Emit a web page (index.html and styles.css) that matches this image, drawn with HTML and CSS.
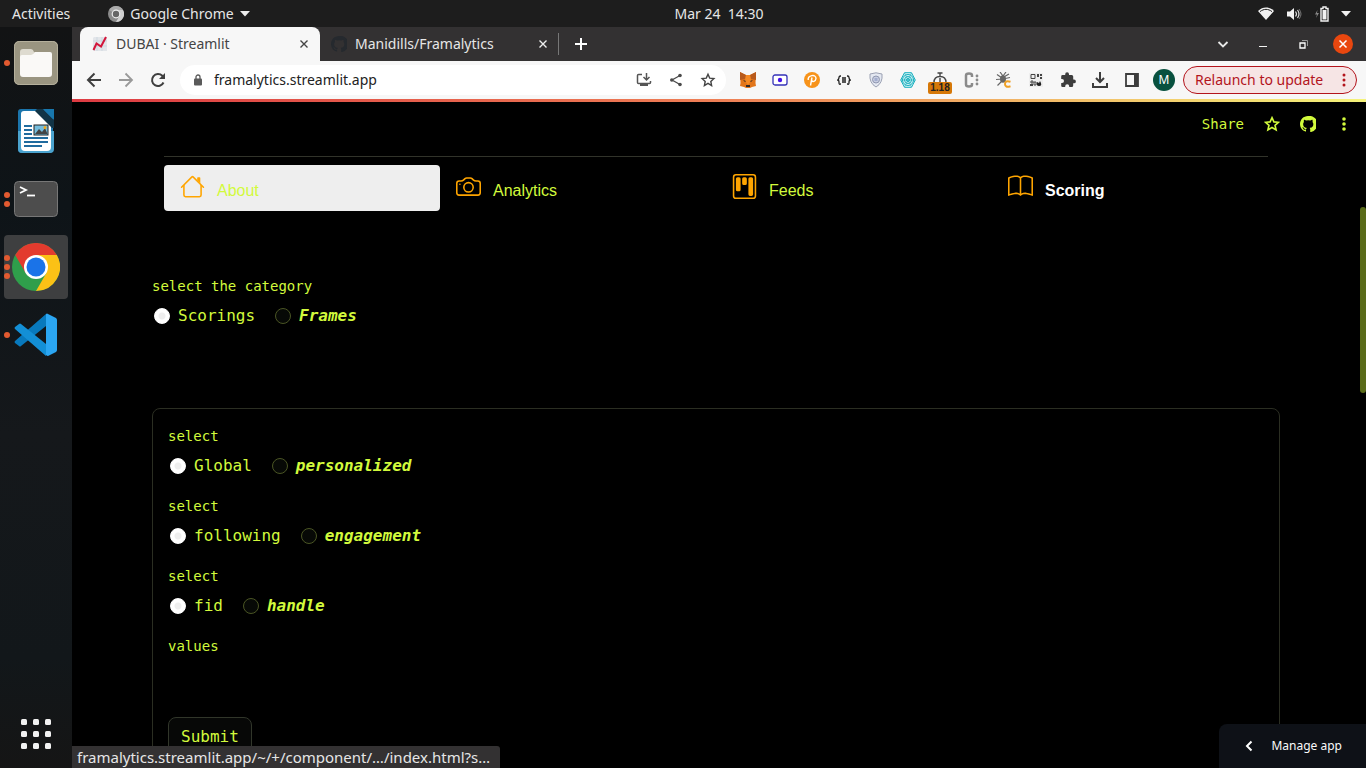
FILE: index.html
```html
<!DOCTYPE html>
<html lang="en">
<head>
<meta charset="utf-8">
<title>DUBAI · Streamlit</title>
<link rel="stylesheet" href="styles.css">
</head>
<body>
<header class="topbar">
  <div class="topbar-left">
    <button class="activities">Activities</button>
    <button class="app-menu">
      <svg width="16" height="16" viewBox="0 0 16 16"><circle cx="8" cy="8" r="8" fill="#8b8b8b"/><path d="M8 8 1.2 4A8 8 0 0 1 15 4H8z" fill="#a9a9a9"/><path d="M8 4h7a8 8 0 0 1-7 12l3.4-6z" fill="#d0d0d0"/><circle cx="8" cy="8" r="4.400" fill="#eee"/><circle cx="8" cy="8" r="3.200" fill="#666"/></svg>
      <span>Google Chrome</span>
      <svg width="10" height="6" viewBox="0 0 10 6"><path d="M0 0h10L5 5.500z" fill="#eee"/></svg>
    </button>
  </div>
  <time class="clock">Mar 24&nbsp; 14:30</time>
  <div class="tray">
    <svg width="16" height="14" viewBox="0 0 16 14"><path d="M0 4C5-.6 11-.6 16 4L8 13z" fill="#f2f2f2"/><path d="M2 4.600c4-3 8-3 12 0" fill="none" stroke="#1d1d1d" stroke-width="1"/></svg>
    <svg width="16" height="14" viewBox="0 0 16 14"><path d="M1 4.500h3L8 1v12L4 9.500H1z" fill="#f2f2f2"/><path d="M9.500 4.500q2 2.500 0 5M11.500 3q3 4 0 8" fill="none" stroke="#ddd" stroke-width="1.200"/><path d="M13 2q4 5 0 10" fill="none" stroke="#777"/></svg>
    <svg width="15" height="16" viewBox="0 0 15 16"><path d="M3.500 4 1 8.500h2L2 12l3-5H3z" fill="#888"/><path d="M9 1h3v1.500h2V15H7V2.500h2z" fill="none" stroke="#f2f2f2" stroke-width="1.400"/><path d="M8.500 4h4v9.500h-4z" fill="#f2f2f2"/></svg>
    <svg width="10" height="6" viewBox="0 0 10 6"><path d="M0 0h10L5 5.500z" fill="#f2f2f2"/></svg>
  </div>
</header>

<div class="desktop">
  <nav class="dock" aria-label="Dock">
    <button class="dock-item" aria-label="Files">
      <span class="dots"><i></i></span>
      <svg width="46" height="46" viewBox="0 0 46 46"><rect x="1" y="1" width="44" height="44" rx="5" fill="#9a9581"/><rect x="1.500" y="1.500" width="43" height="43" rx="5" fill="none" stroke="#b5b09c"/><path d="M7 12q0-3 3-3h8q2 0 3 3l2 1v5H7z" fill="#dedbd0"/><path d="M7 17q0-2 2-2h9q2 0 4-3h15q2 0 2 2v20q0 3-3 3H10q-3 0-3-3z" fill="#faf9f7"/></svg>
    </button>
    <button class="dock-item" aria-label="LibreOffice Writer">
      <svg width="46" height="46" viewBox="0 0 46 46"><path d="M8 1h16l3 4 4-4h9v40q0 4-4 4H9q-4 0-4-4V4q0-3 3-3z" fill="#1b75ac"/><path d="M5 23h36v18q0 4-4 4H9q-4 0-4-4z" fill="#4ba3ce"/><path d="M11 3h12l15 15v21q0 4-4 4H12q-4 0-4-4V6q0-3 3-3z" fill="#fff"/><path d="M24 1h6l11 11v8h-2L22 3z" fill="#123446"/><path d="M30 1h11v11z" fill="#1877ad"/><path d="M11 18h8M11 22h8M11 26h8M11 30h24M11 34h24M11 38h18" stroke="#206b9e" stroke-width="2"/><rect x="21" y="17" width="14" height="10" fill="#75bddd" stroke="#222" stroke-width="1"/><path d="m22 26 4-5 3 3 3-4 2.500 6z" fill="#444"/><circle cx="32" cy="19.500" r="1.500" fill="#f3a81c"/></svg>
    </button>
    <button class="dock-item" aria-label="Terminal">
      <span class="dots"><i></i><i></i></span>
      <svg width="46" height="46" viewBox="0 0 46 46"><rect x="1.500" y="5.500" width="43" height="35" rx="4" fill="#4d4d4d" stroke="#777"/><path d="m7 11 6 3-6 3" fill="none" stroke="#fff" stroke-width="1.800"/><path d="M14 19.500h8" stroke="#fff" stroke-width="1.800"/></svg>
    </button>
    <button class="dock-item dock-active" aria-label="Google Chrome">
      <span class="dots"><i></i><i></i><i></i></span>
      <svg width="48" height="48" viewBox="0 0 48 48"><circle cx="24" cy="24" r="24" fill="#2f9e4b"/><path d="M24 12h20.800A24 24 0 0 1 24 48l10.400-18z" fill="#fbc116"/><path d="M13.600 30 3.200 12a24 24 0 0 1 41.600 0H24z" fill="#e33b2e"/><circle cx="24" cy="24" r="12" fill="#fff"/><circle cx="24" cy="24" r="9.500" fill="#1a73e8"/></svg>
    </button>
    <button class="dock-item" aria-label="Visual Studio Code">
      <span class="dots"><i></i></span>
      <svg width="46" height="46" viewBox="0 0 46 46"><path d="M2 29 33 2v12L8 34q-1 1-2 0l-4-3q-1-1 0-2z" fill="#0879bd"/><path d="M2 17 33 44V32L8 12q-1-1-2 0l-4 3q-1 1 0 2z" fill="#138fd6"/><path d="M33 2q1-1 2 0l8 4q1 1 1 2v30q0 1-1 2l-8 4q-1 0-2-1z" fill="#2ba6f2"/></svg>
    </button>
    <button class="apps-button" aria-label="Show Applications">
      <svg width="32" height="32" viewBox="0 0 32 32" fill="#f2f2f2"><rect x="1" y="1" width="6" height="6" rx="1.500"/><rect x="13" y="1" width="6" height="6" rx="1.500"/><rect x="25" y="1" width="6" height="6" rx="1.500"/><rect x="1" y="13" width="6" height="6" rx="1.500"/><rect x="13" y="13" width="6" height="6" rx="1.500"/><rect x="25" y="13" width="6" height="6" rx="1.500"/><rect x="1" y="25" width="6" height="6" rx="1.500"/><rect x="13" y="25" width="6" height="6" rx="1.500"/><rect x="25" y="25" width="6" height="6" rx="1.500"/></svg>
    </button>
  </nav>

  <div class="browser">
    <div class="tabstrip">
      <div class="tab tab-active">
        <svg width="16" height="16" viewBox="0 0 16 16"><path d="M2 1h13v14H1V2z" fill="#e3e6ea"/><path d="M1 5h14M1 10h14M5 1v14M10 1v14" stroke="#c6d2dc" stroke-width=".7"/><path d="m1.500 14 3-6.500 4.500 3 5-9.500" fill="none" stroke="#d3163b" stroke-width="2"/></svg>
        <button class="tab-title">DUBAI · Streamlit</button>
        <button class="tab-close" aria-label="Close tab"><svg width="8" height="8" viewBox="0 0 8 8"><path d="m.5.5 7 7m0-7-7 7" stroke="#444" stroke-width="1.400"/></svg></button>
      </div>
      <div class="tab">
        <svg width="16" height="16" viewBox="0 0 16 16" fill="#25292e"><path d="M8 0C3.580 0 0 3.580 0 8c0 3.540 2.290 6.530 5.470 7.590.4.070.55-.17.55-.38v-1.490c-2.010.37-2.530-.49-2.690-.94-.5-1.200-.8-1.200-1-1.400.6-.3 1.200 0 2 1.100.8 1 1.500.9 1.900.6.100-.6.300-.9.600-1.100-1.900-.2-3.700-.9-3.700-3.900 0-.9.300-1.600.8-2.200-.1-.2-.3-1 .1-2.100 0 0 .7-.2 2.200.8a7.600 7.600 0 0 1 4 0c1.500-1 2.200-.8 2.200-.8.4 1.100.2 1.900.1 2.100.5.600.8 1.300.8 2.200 0 3.100-1.900 3.700-3.700 3.900.3.300.6.800.6 1.500v2.200c0 .2.100.5.500.4A8 8 0 0 0 8 0z"/></svg>
        <button class="tab-title">Manidills/Framalytics</button>
        <button class="tab-close" aria-label="Close tab"><svg width="8" height="8" viewBox="0 0 8 8"><path d="m.5.5 7 7m0-7-7 7" stroke="#eee" stroke-width="1.400"/></svg></button>
      </div>
      <button class="new-tab" aria-label="New tab"><svg width="12" height="12" viewBox="0 0 12 12"><path d="M6 0v12M0 6h12" stroke="#fff" stroke-width="2"/></svg></button>
      <div class="window-controls">
        <button aria-label="Search tabs"><svg width="12" height="12" viewBox="0 0 12 12"><path d="m1.500 4 4.500 4.500L10.500 4" fill="none" stroke="#e8e8e8" stroke-width="1.800"/></svg></button>
        <button aria-label="Minimize"><svg width="8" height="12" viewBox="0 0 8 12"><path d="M0 8.500h8" stroke="#f2f2f2"/></svg></button>
        <button aria-label="Restore"><svg width="9" height="9" viewBox="0 0 9 9"><path d="M1 3h5v5H1z" fill="none" stroke="#fff" stroke-width="1.300"/><path d="M3 .5h5.500V6" fill="none" stroke="#999"/></svg></button>
        <button aria-label="Close"><svg width="20" height="20" viewBox="0 0 20 20"><circle cx="10" cy="10" r="10" fill="#e9470f"/><path d="m6.500 6.500 7 7m0-7-7 7" stroke="#fff" stroke-width="1.500"/></svg></button>
      </div>
    </div>

    <div class="toolbar">
      <div class="cells nav-buttons">
        <button aria-label="Back"><svg width="16" height="16" viewBox="0 0 16 16"><path d="M15 8H2m6.500-6.500L2 8l6.500 6.500" fill="none" stroke="#3f3f3f" stroke-width="2"/></svg></button>
        <button aria-label="Forward"><svg width="16" height="16" viewBox="0 0 16 16"><path d="M1 8h13M7.500 1.500 14 8l-6.500 6.500" fill="none" stroke="#999" stroke-width="1.800"/></svg></button>
        <button aria-label="Reload"><svg width="16" height="16" viewBox="0 0 16 16"><path d="M13.500 10.500A6 6 0 1 1 12.300 3.800L14 5.500" fill="none" stroke="#3f3f3f" stroke-width="2"/><path d="M15 1v6H9z" fill="#3f3f3f"/></svg></button>
      </div>
      <div class="omnibox">
        <svg width="10" height="12" viewBox="0 0 10 12"><rect x="1" y="4.500" width="8" height="7" rx="1" fill="#5a5a5a"/><path d="M3 5V3a2 2 0 0 1 4 0v2" fill="none" stroke="#5a5a5a" stroke-width="1.300"/></svg>
        <input class="address" type="text" aria-label="Address" value="framalytics.streamlit.app">
        <div class="cells">
          <button aria-label="Install app"><svg width="16" height="16" viewBox="0 0 16 16"><path d="M6 2.500H2.500q-1 0-1 1v7q0 1 1 1h11q1 0 1-1V9M10.500 1v6.500M7.500 5 10.500 8l3-3" fill="none" stroke="#555" stroke-width="1.500"/><path d="M4 12h8v2H4z" fill="#555"/></svg></button>
          <button aria-label="Share page"><svg width="14" height="14" viewBox="0 0 14 14"><path d="M11 2.500 3 7l8 4.500" fill="none" stroke="#4a4a4a" stroke-width="1.300"/><g fill="#4a4a4a"><circle cx="11" cy="2.500" r="1.800"/><circle cx="2.800" cy="7" r="1.800"/><circle cx="11" cy="11.500" r="1.800"/></g></svg></button>
          <button aria-label="Bookmark"><svg width="16" height="16" viewBox="0 0 16 16"><path d="m8 2.300 1.700 3.800 4.200.5-3.100 2.800.8 4.100L8 11.400l-3.600 2.100.8-4.100-3.100-2.800 4.200-.5z" fill="none" stroke="#444" stroke-width="1.400"/></svg></button>
        </div>
      </div>
      <div class="cells extensions">
        <button aria-label="MetaMask"><svg width="18" height="16" viewBox="0 0 18 16"><path d="m1 0 6 3h4l6-3-.5 11L17 14l-4 1-2 1H7l-2-1-4-1 .5-3z" fill="#e2761b"/><path d="m1 0 6 3-1 4-5 1zm16 0-6 3 1 4 5 1z" fill="#b85a1c"/><path d="M7 3h4l1 6-3 4-3-4z" fill="#f58a24"/><path d="m4 8 3 1-1 1zm10 0-3 1 1 1zM7 13h4v2H7z" fill="#302b2b"/></svg></button>
        <button aria-label="Screen recorder"><svg width="16" height="12" viewBox="0 0 16 12"><rect x="1" y="1" width="14" height="10" rx="2" fill="#fff" stroke="#3532b8" stroke-width="1.300"/><circle cx="8" cy="6" r="2.200" fill="#4711e8"/></svg></button>
        <button aria-label="Phantom"><svg width="16" height="16" viewBox="0 0 16 16"><circle cx="8" cy="8" r="8" fill="#f7931a"/><path d="M6.500 13.500 8 5.500M4.200 8C3.500 3.500 12 1.500 12 6.500 11.500 10 8.500 10 7.500 8.500" fill="none" stroke="#fff" stroke-width="1.400"/></svg></button>
        <button aria-label="JSON viewer"><svg width="14" height="10" viewBox="0 0 14 10"><path d="M4 1H3.500Q2 1 2 2.500T.8 5Q2 5 2 7.500T3.500 9H4M10 1h.5Q12 1 12 2.500T13.200 5Q12 5 12 7.500T10.500 9H10M5 3h4M5 5h4M5 7h4" fill="none" stroke="#222" stroke-width="1.300"/></svg></button>
        <button aria-label="Shield"><svg width="14" height="16" viewBox="0 0 14 16"><path d="M7 .8 13 2q1 9-6 13Q0 11 1 2z" fill="#e4e8f1" stroke="#9ba1b3"/><circle cx="7" cy="7.500" r="3.500" fill="#c7cde0" stroke="#8e96b0"/><path d="M5.500 6h3v3h-3z" fill="#a3adce"/></svg></button>
        <button aria-label="Radar"><svg width="16" height="16" viewBox="0 0 16 16" fill="none" stroke="#18aebe"><path d="M4.500.7h7l3.800 7.300-3.800 7.300h-7L.7 8z" fill="#d9f5f7"/><circle cx="8" cy="8" r="5.500"/><circle cx="8" cy="8" r="3.500"/><circle cx="8" cy="8" r="1.500"/><path d="M1 8h14M4.500 1l7 14m0-14-7 14" stroke-width=".6"/></svg></button>
        <button aria-label="Page load time"><svg width="14" height="16" viewBox="0 0 14 16"><path d="M1 10.500q0-6 6-6t6 6M4.500 1h5M7 1v3M7 6v4" fill="none" stroke="#444" stroke-width="1.400"/></svg><span class="timer-badge">1.18</span></button>
        <button aria-label="Clipboard tool"><svg width="16" height="16" viewBox="0 0 16 16"><path d="M8 5V3.500Q8 1.500 5 1.500t-3 2v9q0 2 3 2t3-2V11" fill="none" stroke="#8b8b8b" stroke-width="2.500"/><g fill="#8b8b8b"><circle cx="13" cy="4" r="1.400"/><circle cx="13" cy="8" r="1.400"/><circle cx="13" cy="12" r="1.400"/></g></svg></button>
        <button aria-label="Bug tracker"><svg width="16" height="16" viewBox="0 0 16 16"><ellipse cx="7" cy="7" rx="3" ry="3.800" fill="#666"/><path d="M1 2.500 6 6l7-4M0 7.500l7-.5 7-1.500M1.500 13.500 6 9M4 0l3 4 3-4" fill="none" stroke="#666" stroke-width="1.200"/><path d="M14.500 9.800Q9 8 9 12t5.500 2.200" fill="none" stroke="#efa025" stroke-width="2"/></svg></button>
        <button aria-label="QR code"><svg width="16" height="16" viewBox="0 0 16 16"><path d="M1 1h14v14H1z" fill="#eee"/><path d="M3 2.500h4v4H3zM3 9h2v2H3zm3 1h2v3H6z" fill="none" stroke="#444"/><path d="M9 2h2v3H9zm3 0h2v2h-2zm0 3h2v2h-2zM2 12h3v2H2z" fill="#444"/><path d="M12 9q3 5-1 5-3 0-2-4l2 1z" fill="#222"/></svg></button>
        <button aria-label="Extensions"><svg width="16" height="16" viewBox="0 0 16 16"><path d="M14 7.500h-.8v-3q0-1.500-1.500-1.500H9v-.8a1.900 1.900 0 0 0-3.800 0V3H2.600Q1.200 3 1.200 4.400v2.700H2a2 2 0 0 1 0 4h-.8v2.600q0 1.400 1.400 1.400h2.600v-.8a2 2 0 0 1 4 0v.8h2.500q1.500 0 1.500-1.500v-2.300h.8a1.900 1.900 0 0 0 0-3.800z" fill="#3d3d3d"/></svg></button>
        <button aria-label="Downloads"><svg width="16" height="16" viewBox="0 0 16 16"><path d="M8 0v9M4 6l4 4 4-4M1 11v4h14v-4" fill="none" stroke="#3d3d3d" stroke-width="2"/></svg></button>
        <button aria-label="Side panel"><svg width="14" height="14" viewBox="0 0 14 14"><path d="M1 1h12v12H1z" fill="none" stroke="#3d3d3d" stroke-width="1.800"/><path d="M9 1h4v12H9z" fill="#3d3d3d"/></svg></button>
        <button aria-label="Profile"><span class="avatar">M</span></button>
      </div>
      <button class="relaunch">Relaunch to update <svg width="4" height="14" viewBox="0 0 4 14" fill="#b3141c"><circle cx="2" cy="2" r="1.500"/><circle cx="2" cy="7" r="1.500"/><circle cx="2" cy="12" r="1.500"/></svg></button>
    </div>

    <div class="page">
      <div class="decoration"></div>
      <header class="app-header">
        <button class="share">Share</button>
        <button aria-label="Favorite"><svg width="16" height="16" viewBox="0 0 16 16"><path d="m8 1.700 1.900 4.200 4.600.4-3.500 3 1.100 4.600L8 11.500l-4.100 2.400L5 9.300l-3.500-3 4.600-.4z" fill="none" stroke="#d2fa3c" stroke-width="1.600"/></svg></button>
        <a href="#" aria-label="GitHub"><svg width="16" height="16" viewBox="0 0 16 16" fill="#d2fa3c"><path d="M8 0C3.580 0 0 3.580 0 8c0 3.540 2.290 6.530 5.470 7.590.4.070.55-.17.55-.38v-1.490c-2.010.37-2.530-.49-2.690-.94-.5-1.200-.8-1.200-1-1.400.6-.3 1.200 0 2 1.100.8 1 1.500.9 1.900.6.100-.6.300-.9.600-1.100-1.900-.2-3.700-.9-3.700-3.900 0-.9.300-1.600.8-2.200-.1-.2-.3-1 .1-2.100 0 0 .7-.2 2.200.8a7.600 7.600 0 0 1 4 0c1.500-1 2.200-.8 2.200-.8.4 1.100.2 1.900.1 2.100.5.600.8 1.300.8 2.200 0 3.100-1.900 3.700-3.700 3.900.3.300.6.800.6 1.500v2.200c0 .2.100.5.500.4A8 8 0 0 0 8 0z"/></svg></a>
        <button aria-label="Main menu"><svg width="16" height="16" viewBox="0 0 16 16" fill="#d2fa3c"><circle cx="8" cy="3" r="1.800"/><circle cx="8" cy="8" r="1.800"/><circle cx="8" cy="13" r="1.800"/></svg></button>
      </header>

      <main class="content">
        <nav class="menu">
          <a href="#" class="menu-link hovered"><svg viewBox="0 0 16 16"><path d="M2 13.500V7h1v6.500a.5.5 0 0 0 .5.5h9a.5.5 0 0 0 .5-.5V7h1v6.500a1.500 1.500 0 0 1-1.500 1.500h-9A1.500 1.500 0 0 1 2 13.500zm11-11V6l-2-2V2.500a.5.5 0 0 1 .5-.5h1a.5.5 0 0 1 .5.5z"/><path d="M7.293 1.500a1 1 0 0 1 1.414 0l6.647 6.646a.5.5 0 0 1-.708.708L8 2.207 1.354 8.854a.5.5 0 1 1-.708-.708z"/></svg><span>About</span></a>
          <a href="#" class="menu-link"><svg viewBox="0 0 16 16"><path d="M15 12a1 1 0 0 1-1 1H2a1 1 0 0 1-1-1V6a1 1 0 0 1 1-1h1.172a3 3 0 0 0 2.120-.879l.83-.828A1 1 0 0 1 6.827 3h2.344a1 1 0 0 1 .707.293l.828.828A3 3 0 0 0 12.828 5H14a1 1 0 0 1 1 1v6zM2 4a2 2 0 0 0-2 2v6a2 2 0 0 0 2 2h12a2 2 0 0 0 2-2V6a2 2 0 0 0-2-2h-1.172a2 2 0 0 1-1.414-.586l-.828-.828A2 2 0 0 0 9.172 2H6.828a2 2 0 0 0-1.414.586l-.828.828A2 2 0 0 1 3.172 4H2z"/><path d="M8 11a2.500 2.500 0 1 1 0-5 2.500 2.500 0 0 1 0 5zm0 1a3.500 3.500 0 1 0 0-7 3.500 3.500 0 0 0 0 7zM3 6.500a.5.5 0 1 1-1 0 .5.5 0 0 1 1 0z"/></svg><span>Analytics</span></a>
          <a href="#" class="menu-link"><svg viewBox="0 0 16 16"><path d="M13.500 1a1 1 0 0 1 1 1v12a1 1 0 0 1-1 1h-11a1 1 0 0 1-1-1V2a1 1 0 0 1 1-1h11zm-11-1a2 2 0 0 0-2 2v12a2 2 0 0 0 2 2h11a2 2 0 0 0 2-2V2a2 2 0 0 0-2-2h-11z"/><path d="M6.500 3a1 1 0 0 1 1-1h1a1 1 0 0 1 1 1v3a1 1 0 0 1-1 1h-1a1 1 0 0 1-1-1V3zm-4 0a1 1 0 0 1 1-1h1a1 1 0 0 1 1 1v7a1 1 0 0 1-1 1h-1a1 1 0 0 1-1-1V3zm8 0a1 1 0 0 1 1-1h1a1 1 0 0 1 1 1v10a1 1 0 0 1-1 1h-1a1 1 0 0 1-1-1V3z"/></svg><span>Feeds</span></a>
          <a href="#" class="menu-link selected" aria-current="page"><svg viewBox="0 0 16 16"><path d="M1 2.828c.885-.37 2.154-.769 3.388-.893 1.330-.134 2.458.063 3.112.752v9.746c-.935-.53-2.120-.603-3.213-.493-1.180.12-2.370.461-3.287.811V2.828zm7.500-.141c.654-.689 1.782-.886 3.112-.752 1.234.124 2.503.523 3.388.893v9.923c-.918-.35-2.107-.692-3.287-.81-1.094-.111-2.278-.039-3.213.492V2.687zM8 1.783C7.015.936 5.587.81 4.287.94c-1.514.153-3.042.672-3.994 1.105A.5.5 0 0 0 0 2.500v11a.5.5 0 0 0 .707.455c.882-.4 2.303-.881 3.680-1.020 1.409-.142 2.590.087 3.223.877a.5.5 0 0 0 .78 0c.633-.79 1.814-1.019 3.222-.877 1.378.139 2.800.62 3.681 1.020A.5.5 0 0 0 16 13.500v-11a.5.5 0 0 0-.293-.455c-.952-.433-2.480-.952-3.994-1.105C10.413.809 8.985.936 8 1.783z"/></svg><span>Scoring</span></a>
        </nav>

        <fieldset class="group category">
          <legend>select the category</legend>
          <div class="options">
            <label><input type="radio" name="category" checked><span>Scorings</span></label>
            <label><input type="radio" name="category"><em>Frames</em></label>
          </div>
        </fieldset>

        <form class="panel">
          <fieldset class="group">
            <legend>select</legend>
            <div class="options">
              <label><input type="radio" name="scope" checked><span>Global</span></label>
              <label><input type="radio" name="scope"><em>personalized</em></label>
            </div>
          </fieldset>
          <fieldset class="group">
            <legend>select</legend>
            <div class="options">
              <label><input type="radio" name="metric" checked><span>following</span></label>
              <label><input type="radio" name="metric"><em>engagement</em></label>
            </div>
          </fieldset>
          <fieldset class="group">
            <legend>select</legend>
            <div class="options">
              <label><input type="radio" name="key" checked><span>fid</span></label>
              <label><input type="radio" name="key"><em>handle</em></label>
            </div>
          </fieldset>
          <div class="values">
            <label for="values">values</label>
            <input id="values" type="text">
          </div>
          <button class="submit" type="button">Submit</button>
        </form>
      </main>

      <div class="scroll-thumb"></div>
      <div class="status">framalytics.streamlit.app/~/+/component/…/index.html?s…</div>
      <button class="manage"><svg width="8" height="12" viewBox="0 0 8 12"><path d="M6.500 1.500 2 6l4.500 4.500" fill="none" stroke="#fff" stroke-width="2"/></svg>Manage app</button>
    </div>
  </div>
</div>
</body>
</html>
```
FILE: styles.css
```css
* { box-sizing: border-box; }

body {
  margin: 0;
  height: 100vh;
  display: flex;
  flex-direction: column;
  overflow: hidden;
  background: #000;
  font: 14px/20px "Noto Sans", "Open Sans", sans-serif;
}

button {
  margin: 0;
  padding: 0;
  border: 0;
  background: none;
  color: inherit;
  font: inherit;
  white-space: nowrap;
}

svg { display: block; flex: none; }

/* System bar */
.topbar {
  flex: none;
  display: grid;
  grid-template-columns: 72px 1fr auto 1fr;
  align-items: center;
  height: 27px;
  background: #1d1d1d;
  color: #e6e6e6;
}
.topbar-left {
  grid-column: 1 / 3;
  display: flex;
  align-items: center;
  gap: 38px;
  padding-left: 12px;
}
.app-menu { display: flex; align-items: center; gap: 6px; }
.tray {
  display: flex;
  align-items: center;
  justify-content: flex-end;
  gap: 12px;
  padding-right: 15px;
}

.desktop { flex: 1; display: flex; min-height: 0; }

/* Dock */
.dock {
  flex: none;
  display: flex;
  flex-direction: column;
  gap: 4px;
  width: 72px;
  padding: 4px 4px 18px;
  background: linear-gradient(#121314, #0e1418 24%, #15181b 55%, #12171a 85%, #151515);
}
.dock-item {
  position: relative;
  display: grid;
  place-items: center;
  height: 64px;
  border-radius: 4px;
}
.dock-active { background: #3e3f40; }
.dots {
  position: absolute;
  left: 0;
  top: 0;
  bottom: 0;
  display: flex;
  flex-direction: column;
  justify-content: center;
  gap: 3px;
}
.dots i { width: 6px; height: 6px; border-radius: 50%; background: #e25a30; }
.apps-button { margin-top: auto; align-self: center; }

/* Browser window */
.browser { flex: 1; display: flex; flex-direction: column; min-width: 0; }
.tabstrip {
  flex: none;
  display: flex;
  align-items: stretch;
  height: 34px;
  padding-left: 8px;
  background: #333132;
  color: #e6e6e6;
}
.tab {
  display: flex;
  align-items: center;
  gap: 8px;
  width: 239px;
  padding: 0 11px;
  border-right: 1px solid transparent;
}
.tab:not(.tab-active) {
  border-image: linear-gradient(transparent 20%, #777 20%, #777 80%, transparent 80%) 1;
  border-style: solid;
  border-width: 0 1px 0 0;
}
.tab-active {
  width: 240px;
  padding-left: 12px;
  border-radius: 8px 8px 0 0;
  background: #f7f7f7;
  color: #444;
}
.tab-title { flex: 1; text-align: left; }
.new-tab { width: 44px; display: grid; place-items: center; }
.window-controls { display: flex; margin-left: auto; padding-right: 3px; }
.window-controls button { width: 40px; display: grid; place-items: center; }

.toolbar {
  flex: none;
  display: flex;
  align-items: center;
  gap: 6px;
  height: 38px;
  padding: 0 9px 0 6px;
  background: #f7f7f7;
}
.cells { display: flex; align-items: center; }
.cells button {
  position: relative;
  display: grid;
  place-items: center;
  width: 32px;
  height: 30px;
}
.omnibox {
  flex: 1;
  display: flex;
  align-items: center;
  height: 30px;
  padding: 0 2px 0 13px;
  border-radius: 15px;
  background: #fff;
}
.address {
  flex: 1;
  min-width: 0;
  margin-left: 11px;
  padding: 0;
  border: 0;
  outline: 0;
  background: none;
  color: #222;
  font: inherit;
}
.timer-badge {
  position: absolute;
  bottom: 1px;
  left: 4px;
  width: 24px;
  border-radius: 2px;
  background: #d67808;
  color: #222;
  font: bold 10px/12px "Liberation Sans", sans-serif;
}
.avatar {
  display: block;
  width: 22px;
  border-radius: 50%;
  background: #08513f;
  color: #fff;
  font-size: 12px;
  line-height: 22px;
}
.relaunch {
  display: flex;
  align-items: center;
  justify-content: space-between;
  width: 174px;
  height: 28px;
  margin-left: -3px;
  padding: 0 10px 0 11px;
  border: 1px solid #b3141c;
  border-radius: 14px;
  background: #f6e5e5;
  color: #b3141c;
}

/* App page */
.page {
  position: relative;
  flex: 1;
  min-height: 0;
  overflow: hidden;
  color: #d2fa3c;
  font: 16px/26px "DejaVu Sans Mono", "Liberation Mono", monospace;
}
.decoration { height: 3px; background: linear-gradient(90deg, #dd3b42, #ee7f55 50%, #f5f37a); }
.app-header {
  display: flex;
  align-items: center;
  justify-content: flex-end;
  gap: 20px;
  height: 44px;
  padding-right: 14px;
}
.share { font-size: 14px; }
.content { padding: 10px 86px 0 80px; }

.menu {
  display: grid;
  grid-template-columns: repeat(4, 1fr);
  margin: 0 12px;
  padding-top: 8px;
  border-top: 1px solid #31332a;
  font: 16px/24px "Liberation Sans", Arial, sans-serif;
}
.menu-link {
  display: flex;
  align-items: center;
  gap: 12px;
  height: 46px;
  padding: 0 16px;
  border-radius: 4px;
  color: inherit;
  text-decoration: none;
}
.menu-link svg { width: 25px; height: 25px; fill: #ffa500; margin-bottom: 3px; }
.menu-link span { padding-top: 6px; }
.hovered { background: #eee; }
.selected { color: #fff; font-weight: bold; }

.group { margin: 0 0 16px; padding: 0; border: 0; }
.group legend, .values label {
  display: block;
  padding: 0;
  font-size: 14px;
  line-height: 22px;
}
.category { margin: 64px 0 79px; }
.options { display: flex; gap: 20px; height: 32px; padding: 6px 2px 0; }
.options label { display: flex; align-items: center; gap: 8px; height: 26px; }
.options em { font-weight: bold; }
.options input {
  appearance: none;
  width: 16px;
  height: 16px;
  margin: 0;
  border: 1px solid #4a5524;
  border-radius: 50%;
  background: #070906;
}
.options input:checked { border-color: #fff; background: radial-gradient(#eee 3px, #fff 4px); }

.panel {
  padding: 16px 15px;
  border: 1px solid #2b2e22;
  border-radius: 8px;
}
.values { display: flex; flex-direction: column; height: 82px; }
.values input { height: 40px; border: 0; background: none; color: inherit; font: inherit; }
.submit {
  height: 40px;
  padding: 0 12px;
  border: 1px solid #31362a;
  border-radius: 8px;
  background: #070807;
}

/* Overlays */
.scroll-thumb {
  position: absolute;
  top: 108px;
  right: 0;
  width: 6px;
  height: 186px;
  border-radius: 3px;
  background: #596b18;
}
.status {
  position: absolute;
  left: 0;
  bottom: 0;
  padding: 0 10px 0 5px;
  border-radius: 0 3px 0 0;
  background: #333132;
  color: #e6e6e6;
  font: 15px/22px "Noto Sans", sans-serif;
}
.manage {
  position: absolute;
  right: 0;
  bottom: 0;
  display: flex;
  align-items: center;
  gap: 18px;
  height: 44px;
  padding: 0 24px 0 26px;
  border-radius: 8px 0 0 0;
  background: #0e1117;
  color: #fafafa;
  font: 12px/20px "Noto Sans", sans-serif;
}
```
